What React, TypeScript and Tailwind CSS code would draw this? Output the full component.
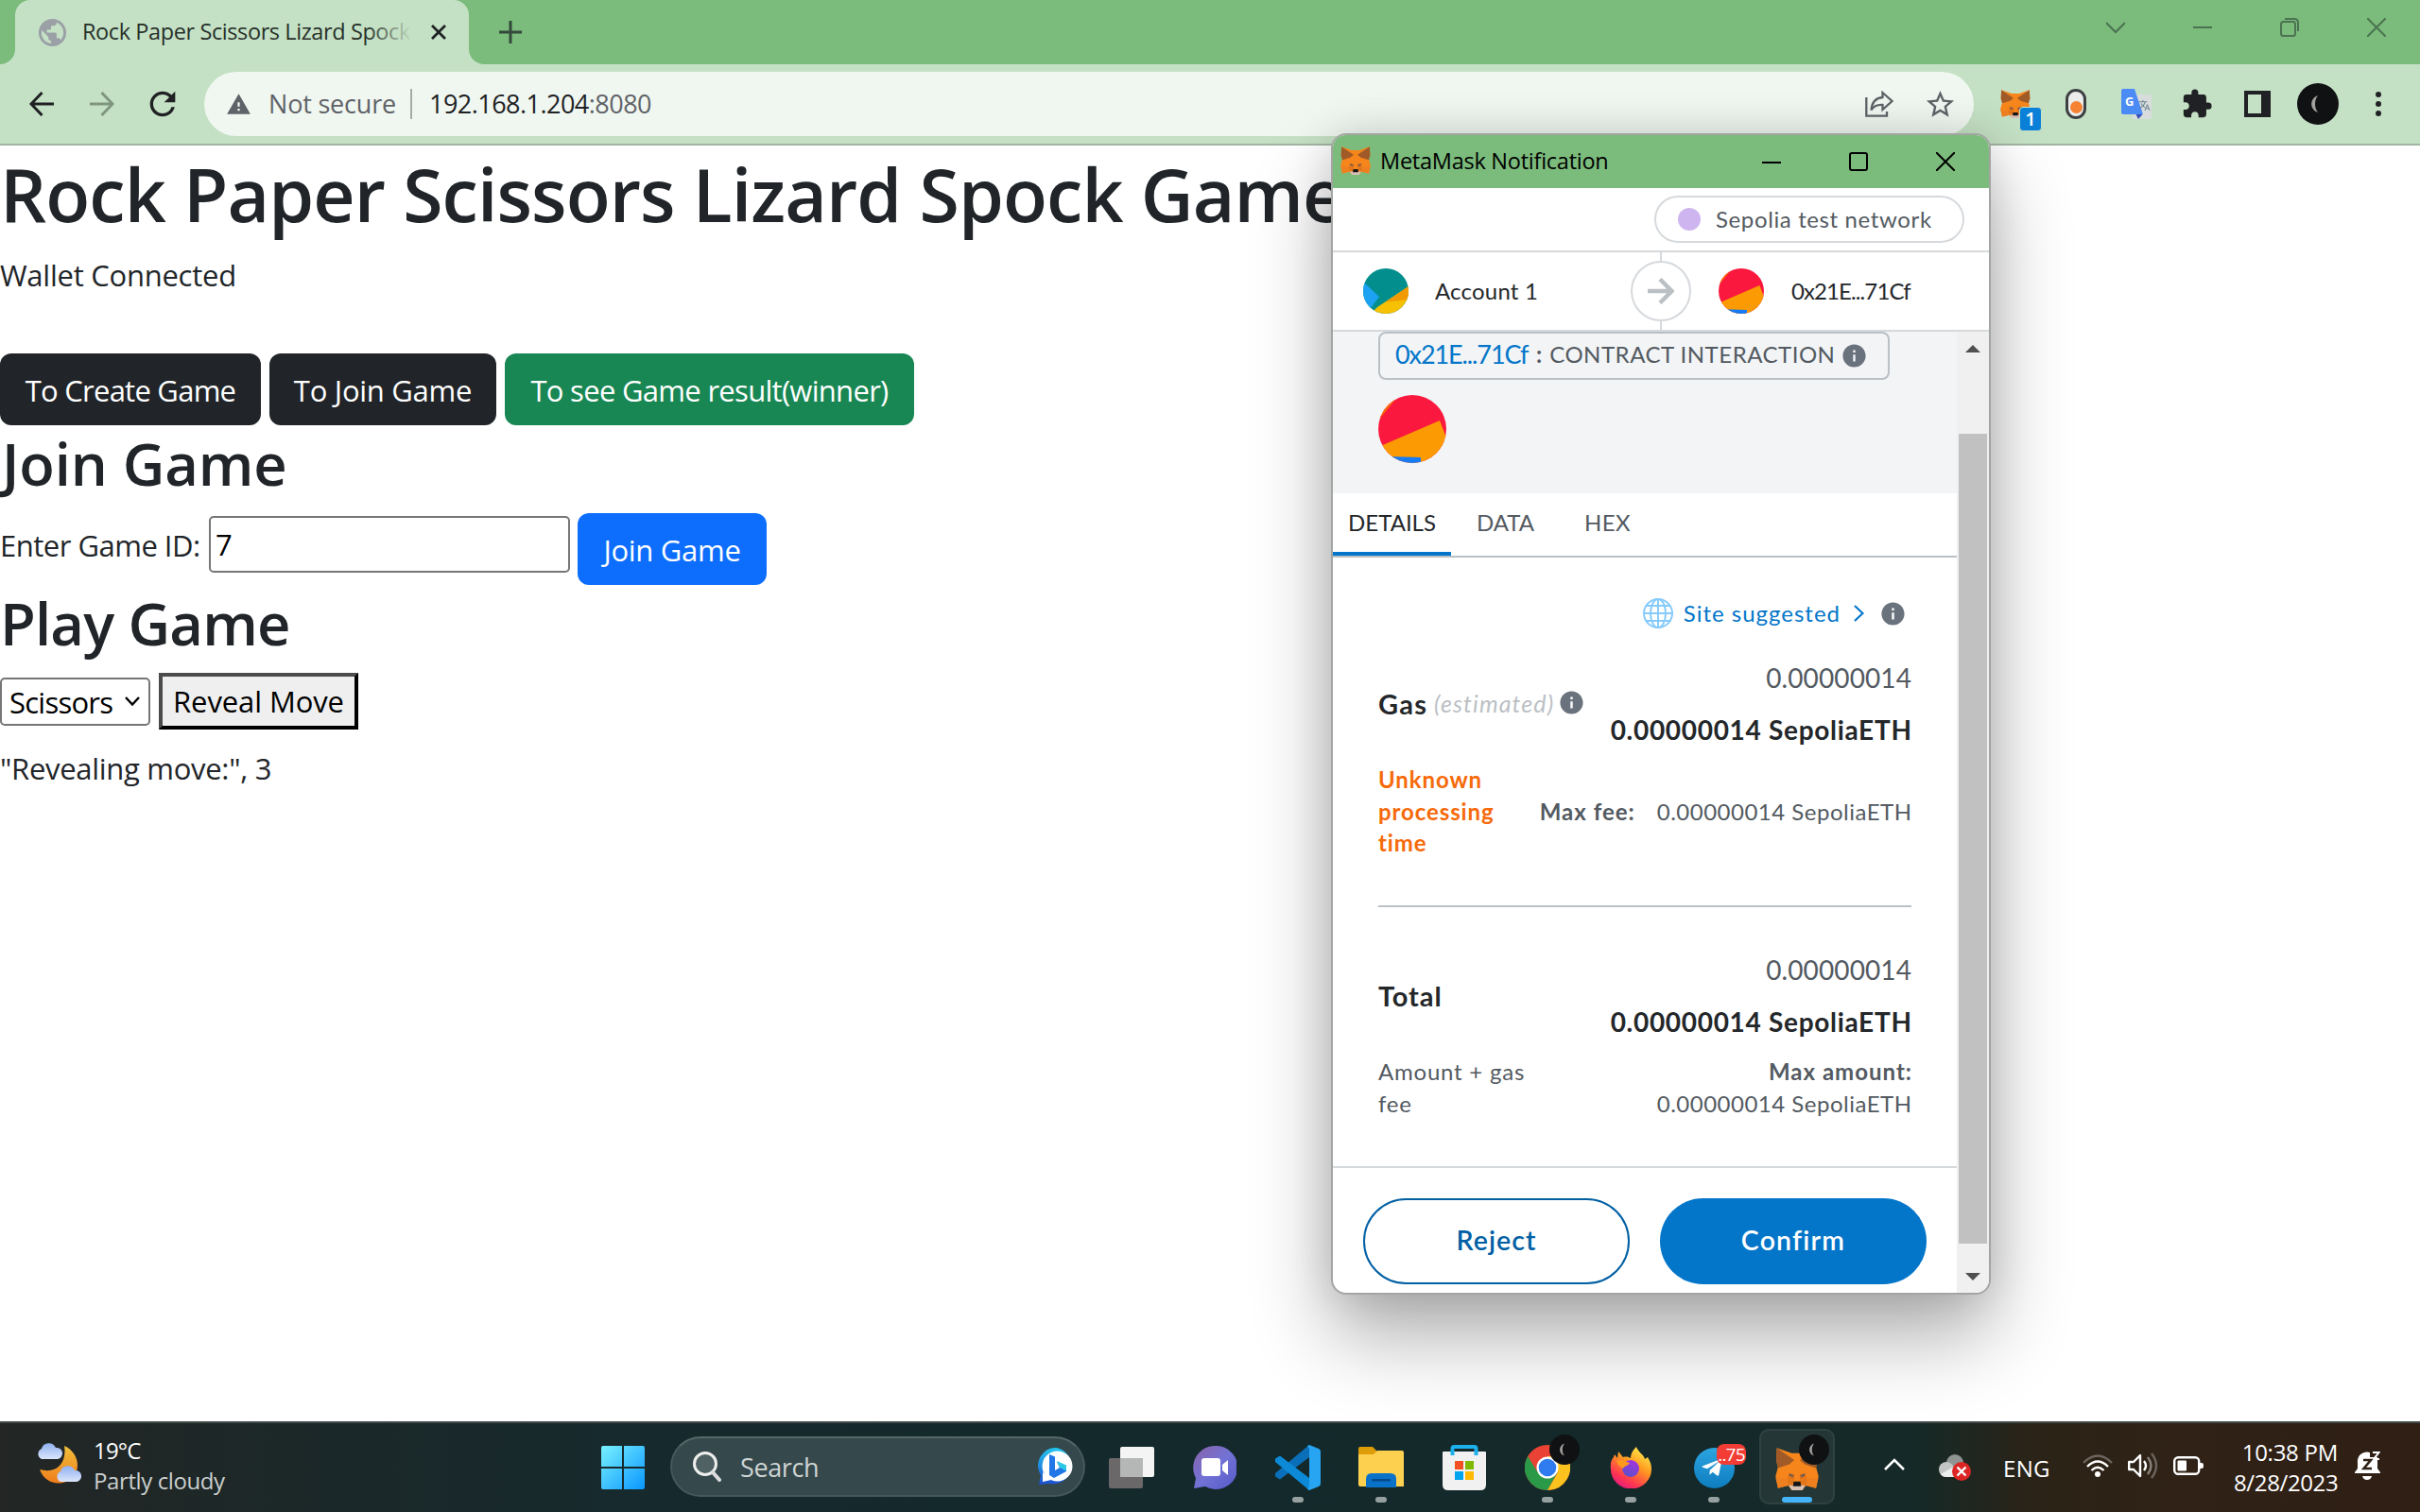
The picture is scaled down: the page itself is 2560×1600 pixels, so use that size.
import type { ReactNode } from "react";
import { MdExtension, MdInfo, MdPublic, MdRefresh, MdStarBorder, MdTranslate, MdWarning } from "react-icons/md";
import { FaTelegramPlane } from "react-icons/fa";

function Fox({ className }: { className?: string }) {
  return (
    <svg viewBox="0 0 142 138" preserveAspectRatio="none" className={className}>
      <path d="M5 1 54 18H88L137 1 139 42 133 62 141 92 133 131 100 123 88 138H54L42 123 9 131 1 92 9 62 3 42Z" fill="#f6851b" />
      <path d="M5 1 62 40 46 54 9 66 3 42Z" fill="#a05a28" />
      <path d="M137 1 80 40 96 54 133 66 139 42Z" fill="#a05a28" />
      <path d="M9 131 42 123 38 100 1 97ZM133 131 100 123 104 100 141 97Z" fill="#ee8020" />
      <path d="M38 97 62 106 58 124 42 123ZM104 97 80 106 84 124 100 123Z" fill="#e2761b" />
      <path d="M40 96 46 82 62 86 62 104ZM102 96 96 82 80 86 80 104Z" fill="#dc701a" />
      <path d="M44 84 60 90 57 95 47 91ZM98 84 82 90 85 95 95 91Z" fill="#5b5a5c" />
      <path d="M44 122 60 122H82L98 122 88 138H54Z" fill="#d8c0b4" />
      <path d="M60 110H82L84 125H58Z" fill="#161616" />
    </svg>
  );
}

function Moon({ className }: { className?: string }) {
  return (
    <svg viewBox="0 0 44 44" className={className}>
      <circle cx="22" cy="22" r="22" fill="#101113" />
      <path d="M22 13c-9 3-9 15 0 18-4-5-4-13 0-18z" fill="#a3a09d" />
    </svg>
  );
}

function BrowserTop() {
  return (
    <header className="flex h-[154px] flex-none flex-col bg-[#c5e1c5]">
      <div className="flex h-[68px] bg-[#7bbb7c]">
        <div className="flex w-4 items-end bg-[#c5e1c5]">
          <div className="h-[68px] w-4 rounded-br-[16px] bg-[#7bbb7c]" />
        </div>
        <div className="w-[480px] bg-[#7bbb7c]">
          <div className="flex h-[68px] items-center rounded-t-[16px] bg-[#c5e1c5] pl-[22px]">
            <MdPublic className="size-[35px] flex-none text-[#9aa0a6]" />
            <div className="relative ml-[14px] h-9 w-[349px] overflow-hidden text-[23.5px] leading-[35px] tracking-[-0.4px] whitespace-nowrap text-[#27302a]">
              Rock Paper Scissors Lizard Spock
              <div className="absolute top-0 right-0 h-full w-12 bg-linear-to-r from-transparent to-[#c5e1c5]" />
            </div>
            <svg viewBox="0 0 20 20" className="ml-[18px] size-[20px]" stroke="#202124" strokeWidth="2.8" fill="none">
              <path d="M3 3 17 17M17 3 3 17" />
            </svg>
          </div>
        </div>
        <div className="flex w-4 bg-[#c5e1c5]">
          <div className="h-[68px] w-4 rounded-bl-[16px] bg-[#7bbb7c]" />
        </div>
        <svg viewBox="0 0 24 24" className="mt-[22px] ml-4 size-6" stroke="#33493a" strokeWidth="3" fill="none">
          <path d="M12 0V24M0 12H24" />
        </svg>
        <div className="mr-9 ml-auto flex items-start gap-[72px] pt-[19px]">
          <svg viewBox="0 0 20 20" className="size-5" stroke="#4b7350" strokeWidth="2" fill="none"><path d="M0 5 10 15 20 5" /></svg>
          <svg viewBox="0 0 20 20" className="size-5" stroke="#4b7350" strokeWidth="2" fill="none"><path d="M0 10H20" /></svg>
          <svg viewBox="0 0 20 20" className="size-5" stroke="#4b7350" strokeWidth="2" fill="none">
            <rect x="1" y="4" width="15" height="15" rx="2.5" /><path d="M5 1H15Q19 1 19 5V14" />
          </svg>
          <svg viewBox="0 0 20 20" className="size-5" stroke="#4b7350" strokeWidth="2" fill="none"><path d="M0 0 20 20M20 0 0 20" /></svg>
        </div>
      </div>
      <div className="flex h-[86px] items-start border-b-2 border-[#a1b6a2] pt-2">
        <div className="flex h-[68px] w-[216px] items-center pl-[31px]">
          <svg viewBox="0 0 26 26" className="size-[26px]" stroke="#202124" strokeWidth="3" fill="none"><path d="M26 13H2M13.500 1 2 13 13.500 25" /></svg>
          <svg viewBox="0 0 26 26" className="ml-[38px] size-[26px]" stroke="#80957f" strokeWidth="3" fill="none"><path d="M0 13H24M12.500 1 24 13 12.500 25" /></svg>
          <MdRefresh className="ml-[31px] size-10 text-[#202124]" />
        </div>
        <div className="flex h-[68px] w-[1872px] items-center rounded-full bg-[#f0f7f0] pl-[23px]">
          <MdWarning className="size-[27px] text-[#5f6368]" />
          <span className="ml-[18px] w-[134px] text-[27px] leading-[68px] tracking-[-0.2px] whitespace-nowrap text-[#5f6368]">Not secure</span>
          <div className="ml-[16px] h-8 w-[2px] bg-[#a5aba6]" />
          <span className="ml-[18px] text-[27px] leading-[68px] tracking-[-0.53px] whitespace-nowrap text-[#202124]">
            192.168.1.204<span className="text-[#5f6368]">:8080</span>
          </span>
          <svg viewBox="0 0 30 28" className="ml-auto h-7 w-[30px]" stroke="#5f6368" strokeWidth="2.300" fill="none">
            <path d="M1.300 7V26.700H23V22" />
            <path d="M18.500 2 28.500 11 18.500 20V15Q10 14.500 6.500 20.500 7.500 8 18.500 7Z" />
          </svg>
          <MdStarBorder className="mr-[18px] ml-[32px] size-[35px] text-[#5f6368]" />
        </div>
        <div className="ml-7 flex h-[68px] items-center">
          <div className="relative h-[30px] w-8">
            <Fox className="h-[30px] w-8" />
            <div className="absolute top-[18px] left-5 flex h-[26px] w-6 items-center justify-center rounded-[4px] border border-[#c5e1c5] bg-[#0b80d8] text-[20px] font-semibold text-white">1</div>
          </div>
          <div className="ml-[37px] flex h-8 w-[22px] items-end justify-center rounded-full border-[3px] border-[#3c4043] bg-[#ececec] pb-[3px]">
            <div className="size-[13px] rounded-full bg-[#f58233]" />
          </div>
          <svg viewBox="0 0 32 32" className="ml-[37px] size-8">
            <rect x="12" y="6" width="20" height="26" rx="2" fill="#d9dcdd" />
            <path d="M15.500 27H22.500L18 32Z" fill="#3450b5" />
            <path d="M2 0H14L23 27H2Q0 27 0 25V2Q0 0 2 0Z" fill="#4b8bf5" />
            <text x="4" y="18" fontSize="13" fontWeight="700" fill="#fff">G</text>
            <MdTranslate x="18" y="11" size="13" color="#6b8790" />
          </svg>
          <MdExtension className="ml-[31px] size-[34px] text-[#202124]" />
          <div className="ml-[33px] h-7 w-7 border-y-[4px] border-r-[10px] border-l-[4px] border-[#202124]" />
          <Moon className="ml-7 size-11" />
          <div className="ml-[39px] flex flex-col gap-1">
            <div className="size-[6px] rounded-full bg-[#202124]" />
            <div className="size-[6px] rounded-full bg-[#202124]" />
            <div className="size-[6px] rounded-full bg-[#202124]" />
          </div>
        </div>
      </div>
    </header>
  );
}

function GamePage() {
  return (
    <main className="flex min-h-0 flex-1 flex-col bg-white pt-[4px] text-[31px] text-[#212529]">
      <h1 className="h-[95px] text-[77px] leading-[96px] font-semibold tracking-[-0.9px] whitespace-nowrap">Rock Paper Scissors Lizard Spock Game</h1>
      <p className="mt-[14px] h-12 leading-[48px] tracking-[-0.25px]">Wallet Connected</p>
      <div className="mt-[59px] flex h-[76px] text-white">
        <button className="w-[276px] rounded-[12px] bg-[#212529] pt-[2px] tracking-[-0.75px]">To Create Game</button>
        <button className="ml-[9px] w-[240px] rounded-[12px] bg-[#212529] pt-[2px] tracking-[-0.27px]">To Join Game</button>
        <button className="ml-[9px] w-[433px] rounded-[12px] bg-[#198754] pt-[2px] tracking-[-0.7px]">To see Game result(winner)</button>
      </div>
      <h2 className="mt-[2px] h-[76px] pl-[2px] text-[61.5px] leading-[76px] font-semibold tracking-[-0.1px]">Join Game</h2>
      <div className="mt-[15px] flex h-[76px] items-start">
        <label className="w-[221px] leading-[68px] tracking-[-0.5px]">Enter Game ID:</label>
        <div className="mt-[3px] h-[60px] w-[382px] rounded-[5px] border-2 border-[#767676] bg-white pl-[5px] leading-[57px] text-black">7</div>
        <button className="ml-2 h-[76px] w-[200px] rounded-[12px] bg-[#0d6efd] pt-[2px] tracking-[-0.3px] text-white">Join Game</button>
      </div>
      <h2 className="mt-[2px] h-[76px] text-[61.5px] leading-[76px] font-semibold tracking-[-0.8px]">Play Game</h2>
      <div className="mt-[15px] flex h-[60px] items-center text-black">
        <div className="flex h-[51px] w-[159px] items-center rounded-[5px] border-2 border-[#767676] bg-white pl-[8px]">
          <span className="w-[122px] pt-[3px] tracking-[-0.75px]">Scissors</span>
          <svg viewBox="0 0 16 10" className="h-[10px] w-4" stroke="#000" strokeWidth="2.400" fill="none"><path d="M1 1 8 8.500 15 1" /></svg>
        </div>
        <button className="ml-[9px] h-[60px] w-[211px] border-4 border-t-[#4c4c4c] border-r-black border-b-black border-l-[#4c4c4c] bg-[#efefef] pt-px tracking-[-0.1px]">Reveal Move</button>
      </div>
      <p className="mt-[17px] h-12 leading-[48px] tracking-[-0.3px]">"Revealing move:", 3</p>
    </main>
  );
}

function TargetAvatar({ className }: { className?: string }) {
  return (
    <svg viewBox="0 0 72 72" className={className}>
      <clipPath id="disc"><circle cx="36" cy="36" r="36" /></clipPath>
      <g clipPath="url(#disc)">
        <rect width="72" height="72" fill="#fb183f" />
        <path d="M0 0H22L4 22 0 28Z" fill="#fa6a05" />
        <path d="M0 55 65 27 80 66V80H0Z" fill="#fb9a02" />
        <path d="M10 65 45 66V80H5Z" fill="#167bf5" />
      </g>
    </svg>
  );
}

function AccountAvatar() {
  return (
    <svg viewBox="0 0 48 48" className="size-12">
      <clipPath id="acct"><circle cx="24" cy="24" r="24" /></clipPath>
      <g clipPath="url(#acct)">
        <rect width="48" height="48" fill="#018e8c" />
        <path d="M15 41 48 19V48H8Z" fill="#f6c003" />
        <path d="M48 19 24 35.500 48 33Z" fill="#f29a02" />
        <path d="M0 14 17 30 8 42 0 44Z" fill="#1ba2f2" />
      </g>
    </svg>
  );
}

function Info({ className }: { className?: string }) {
  return <MdInfo className={`size-[29px] flex-none text-[#6a737d] ${className ?? ""}`} />;
}

function FeeRow({ label, children }: { label: ReactNode; children?: ReactNode }) {
  return (
    <div className="flex h-[110px] items-center justify-between">
      <div className="flex items-center">{label}{children}</div>
      <div className="text-right text-[28px] leading-[55px] whitespace-nowrap">
        <div className="tracking-[0.1px] text-[#535a61]">0.00000014</div>
        <div className="-mr-[0.700px] font-bold tracking-[0.7px] text-[#24272a]">0.00000014 SepoliaETH</div>
      </div>
    </div>
  );
}

function Notification() {
  return (
    <section className="absolute top-[141px] left-[1408px] flex h-[1229px] w-[698px] flex-col overflow-hidden rounded-[16px] border-2 border-[#a3a5a3] bg-white font-['Lato',sans-serif] text-[24px] text-[#24272a] shadow-[0_44px_84px_rgba(0,0,0,0.32),0_0_44px_rgba(0,0,0,0.12)]">
      <div className="flex h-14 flex-none items-center bg-[#7bbb7c] pl-[8px] font-['Open_Sans',sans-serif] text-[23.5px] text-black">
        <Fox className="-mt-[2px] h-[30px] w-[32px]" />
        <span className="ml-[10px] tracking-[-0.25px]">MetaMask Notification</span>
        <div className="mr-9 ml-auto flex gap-[72px]">
          <svg viewBox="0 0 20 20" className="size-5" stroke="#000" strokeWidth="2" fill="none"><path d="M0 11H20" /></svg>
          <svg viewBox="0 0 20 20" className="size-5" stroke="#000" strokeWidth="2" fill="none"><rect x="1" y="1" width="18" height="18" rx="2" /></svg>
          <svg viewBox="0 0 20 20" className="size-5" stroke="#000" strokeWidth="2" fill="none"><path d="M0 0 20 20M20 0 0 20" /></svg>
        </div>
      </div>
      <div className="flex h-[68px] flex-none items-center justify-end border-b-2 border-[#d6d9dc] pr-[26px]">
        <div className="flex h-[50px] w-[328px] items-center rounded-full border-2 border-[#d6d9dc] pl-[23px]">
          <div className="size-6 rounded-full bg-[#cfb5f0]" />
          <span className="ml-4 pb-px tracking-[0.62px] text-[#535a61]">Sepolia test network</span>
        </div>
      </div>
      <div className="flex h-[84px] flex-none items-center border-b-2 border-[#d6d9dc]">
        <div className="flex w-[315px] items-center pl-8">
          <AccountAvatar />
          <span className="ml-[28px] pb-px tracking-[0.2px]">Account 1</span>
        </div>
        <div className="flex h-full flex-col items-center">
          <div className="w-[2px] flex-1 bg-[#d6d9dc]" />
          <div className="flex size-16 items-center justify-center rounded-full border-2 border-[#d6d9dc]">
            <svg viewBox="0 0 28 28" className="size-7" stroke="#bbc0c5" strokeWidth="4.500" fill="none"><path d="M0 14H25M13 1.500 25.500 14 13 26.500" /></svg>
          </div>
          <div className="w-[2px] flex-1 bg-[#d6d9dc]" />
        </div>
        <TargetAvatar className="ml-[29px] size-12" />
        <span className="ml-[29px] pb-px tracking-[-0.9px]">0x21E...71Cf</span>
      </div>
      <div className="flex min-h-0 flex-1">
        <div className="flex w-[660px] flex-col">
          <div className="h-[171px] flex-none bg-[#f2f4f6] pl-12">
            <div className="flex h-[51px] w-[541px] items-center rounded-[8px] border-2 border-[#bbc0c5] pb-[3px] pl-[16px] whitespace-nowrap text-[#535a61]">
              <span className="w-[140px] text-[27px] tracking-[-1.100px] text-[#0376c9]">0x21E...71Cf</span>
              <span className="ml-[9px] font-bold">:</span>
              <span className="ml-[8px] tracking-[0.5px]">CONTRACT INTERACTION</span>
              <Info className="mt-[2px] ml-[6px]" />
            </div>
            <TargetAvatar className="mt-4 size-[72px]" />
          </div>
          <div className="flex h-[68px] flex-none border-b-2 border-[#bbc0c5] leading-[62px] text-[#535a61]">
            <div className="w-[125px] border-b-4 border-[#0376c9] text-center text-[#24272a]">DETAILS</div>
            <div className="ml-[27px] w-[63px]">DATA</div>
            <div className="ml-[51px] tracking-[0.4px]">HEX</div>
          </div>
          <div className="h-[644px] flex-none px-12 pt-[43px]">
            <div className="flex h-8 items-center justify-end pr-[5px] text-[#0376c9]">
              <svg viewBox="0 0 32 32" className="size-8" stroke="#86cbfb" strokeWidth="2" fill="none">
                <circle cx="16" cy="16" r="15" /><ellipse cx="16" cy="16" rx="8" ry="15" /><path d="M16 1V31M1 16H31M4 8H28M4 24H28" />
              </svg>
              <span className="ml-[11px] pb-px tracking-[1px]">Site suggested</span>
              <svg viewBox="0 0 11 18" className="mr-4 ml-[14px] h-[18px] w-[11px]" stroke="#0376c9" strokeWidth="2.200" fill="none"><path d="M1 1 9.500 9 1 17" /></svg>
              <Info />
            </div>
            <div className="mt-[25px]">
              <FeeRow label={<span className="text-[29px] font-bold tracking-[1.2px]">Gas</span>}>
                <span className="ml-[7px] text-[25px] tracking-[1.100px] text-[#bbc0c5] italic">(estimated)</span>
                <Info className="-mt-[3px] ml-[4px]" />
              </FeeRow>
            </div>
            <div className="mt-2 flex h-[101px] items-center justify-between leading-[33.7px] text-[#535a61]">
              <div className="w-[130px] font-bold tracking-[0.900px] text-[#f66a0a]">Unknown processing time</div>
              <div className="flex">
                <span className="font-bold tracking-[1px]">Max fee:</span>
                <span className="-mr-[0.500px] ml-[23px] tracking-[0.5px]">0.00000014 SepoliaETH</span>
              </div>
            </div>
            <div className="mt-[49px] h-[2px] bg-[#bbc0c5]" />
            <div className="mt-[39px]">
              <FeeRow label={<span className="text-[29px] font-bold tracking-[0.9px]">Total</span>} />
            </div>
            <div className="mt-[8px] flex justify-between leading-[34px] text-[#535a61]">
              <div className="w-[170px] tracking-[0.78px]">Amount + gas fee</div>
              <div className="text-right">
                <div className="-mr-px font-bold tracking-[1px]">Max amount:</div>
                <div className="-mr-[0.500px] tracking-[0.5px]">0.00000014 SepoliaETH</div>
              </div>
            </div>
          </div>
          <div className="flex flex-1 gap-8 border-t-2 border-[#d6d9dc] px-8 pt-8 text-[28.5px] font-semibold">
            <button className="h-[91px] w-[282px] rounded-full border-2 border-[#0260a4] pb-[3px] tracking-[1.100px] text-[#0260a4]">Reject</button>
            <button className="h-[91px] w-[282px] rounded-full bg-[#0376c9] pb-[3px] tracking-[1.200px] text-white">Confirm</button>
          </div>
        </div>
        <div className="flex w-[34px] flex-col items-center bg-[#f0f0f0]">
          <svg viewBox="0 0 16 8" className="mt-[14px] h-2 w-4 flex-none"><path d="M0 8 8 0 16 8Z" fill="#505050" /></svg>
          <div className="mt-[86px] h-[857px] w-[30px] flex-none bg-[#c1c1c1]" />
          <svg viewBox="0 0 16 8" className="mt-[31px] h-2 w-4 flex-none"><path d="M0 0 8 8 16 0Z" fill="#505050" /></svg>
        </div>
      </div>
    </section>
  );
}

function Slot({ children, running }: { children: ReactNode; running?: boolean }) {
  return (
    <div className="relative flex w-[88px] items-center justify-center">
      {children}
      {running && <div className="absolute bottom-[10px] left-[38px] h-[6px] w-3 rounded-full bg-[#97a0a0]" />}
    </div>
  );
}

function Cloud({ x, y }: { x: number; y: number }) {
  return (
    <g transform={`translate(${x} ${y})`}>
      <path d="M6 18a6 6 0 0 1 0-11 8 8 0 0 1 15-1 6 6 0 0 1 2 12z" fill="url(#cloudFill)" />
    </g>
  );
}

function Taskbar() {
  return (
    <footer className="relative flex h-24 flex-none border-t-2 border-[#434b4b] bg-[linear-gradient(90deg,#232625_0%,#1c2828_12%,#162a2e_28%,#13292b_50%,#15292a_70%,#152a28_79%,#2b2317_84%,#302217_90%,#2f1f15_100%)] text-[24px] text-white">
      <div className="flex w-[615px] items-start pl-[38px]">
        <svg viewBox="0 0 48 44" className="mt-5 h-11 w-12">
          <defs>
            <linearGradient id="cloudFill" x1="0" y1="0" x2="0" y2="1"><stop offset="0" stopColor="#8fb0f0" /><stop offset="1" stopColor="#dbe5fb" /></linearGradient>
            <linearGradient id="moonFill" x1="0" y1="0" x2="0" y2="1"><stop offset="0" stopColor="#f0c03a" /><stop offset="1" stopColor="#ef7d1c" /></linearGradient>
          </defs>
          <path d="M30 4C44 10 49 28 38 38 27 48 9 44 4 29 22 34 33 22 30 4Z" fill="url(#moonFill)" />
          <Cloud x={0} y={0} />
          <Cloud x={20} y={24} />
        </svg>
        <div className="mt-[13px] ml-[13px] leading-8">
          <div className="tracking-[-0.8px]">19°C</div>
          <div className="tracking-[-0.4px] text-[#cbcfce]">Partly cloudy</div>
        </div>
      </div>
      <Slot>
        <svg viewBox="0 0 46 46" className="size-[46px]">
          <linearGradient id="win" x1="0" y1="0" x2="1" y2="1" gradientUnits="objectBoundingBox"><stop offset="0" stopColor="#78f1ff" /><stop offset="1" stopColor="#0a96ff" /></linearGradient>
          <path d="M2 0H22V22H0V2Q0 0 2 0ZM24 0H44Q46 0 46 2V22H24ZM0 24H22V46H2Q0 46 0 44ZM24 24H46V44Q46 46 44 46H24Z" fill="url(#win)" />
        </svg>
      </Slot>
      <div className="mt-[14px] mr-[5px] ml-[6px] flex h-16 w-[439px] items-center rounded-full border-2 border-[#44595b] border-t-[#566769] bg-[#35484b] pl-[22px] text-[27px] text-[#cfd4d4]">
        <svg viewBox="0 0 30 32" className="h-8 w-[30px]" fill="none">
          <circle cx="13" cy="13" r="11.500" fill="#506163" stroke="#eee" strokeWidth="3" />
          <path d="M21 22 28 30" stroke="#ddd" strokeWidth="4" strokeLinecap="round" />
        </svg>
        <span className="ml-5 pt-[3px] tracking-[-0.4px]">Search</span>
        <svg viewBox="0 0 40 40" className="mr-[8px] ml-auto size-10">
          <linearGradient id="bing" x1="0" y1="0" x2="0" y2="1"><stop offset="0" stopColor="#22c5ee" /><stop offset="1" stopColor="#1d4fd0" /></linearGradient>
          <path d="M20 0A19 19 0 1 1 12 38L1 39 3 29A19 19 0 0 1 20 0Z" fill="url(#bing)" />
          <circle cx="20.500" cy="19.500" r="16" fill="#fff" /><path d="M5 26V36L14 34Z" fill="#fff" />
          <path d="M12 7 18 9.500V24L23 21 20 15 30 19V25L17 32 12 29Z" fill="#2176e8" />
          <path d="M20 14 30 18.500V24.500L23 21Z" fill="#2cc8e4" />
        </svg>
      </div>
      <Slot>
        <svg viewBox="0 0 48 44" className="h-11 w-12">
          <rect x="12" width="36" height="32" rx="2" fill="#f4f4f4" />
          <rect y="12" width="36" height="32" rx="2" fill="#6b6869" />
          <rect x="12" y="12" width="24" height="20" fill="#b5b6b6" />
        </svg>
      </Slot>
      <Slot>
        <svg viewBox="0 0 46 46" className="size-[46px]">
          <linearGradient id="chat" x1="0" y1="0" x2="1" y2="1"><stop offset="0" stopColor="#8a62a8" /><stop offset=".5" stopColor="#7272d6" /><stop offset="1" stopColor="#5558c8" /></linearGradient>
          <path d="M23 0A23 23 0 1 1 13 43L1 45 3 34A23 23 0 0 1 23 0Z" fill="url(#chat)" />
          <rect x="9" y="13" width="20" height="19" rx="3" fill="#fff" /><path d="M31 20 37 15V31L31 26Z" fill="#fff" />
        </svg>
      </Slot>
      <Slot running>
        <svg viewBox="0 0 48 48" className="size-12">
          <path d="M36 0V13L5 36.500 0 33.500V30Z" fill="#0a6fb8" />
          <path d="M5 11.500 36 35V48L0 18V14.500Z" fill="#0c8ad8" />
          <path d="M36 0 46 4Q48 5 48 7V41Q48 43 46 44L36 48 34 47 36 44V4L34 1Z" fill="#27a5f2" />
        </svg>
      </Slot>
      <Slot running>
        <svg viewBox="0 0 48 44" className="h-11 w-12">
          <path d="M0 2Q0 0 2 0H15L20 5V14H0Z" fill="#dd9d09" />
          <path d="M0 8H16L20 4H46Q48 4 48 6V42H2Q0 42 0 40Z" fill="#fed050" />
          <path d="M8 43V34Q8 28 14 28H34Q40 28 40 34V43Z" fill="#0a72c8" />
          <rect x="14" y="34" width="20" height="2.500" rx="1" fill="#064a8c" />
        </svg>
      </Slot>
      <Slot>
        <svg viewBox="0 0 46 48" className="h-12 w-[46px]">
          <path d="M10.500 12V4Q10.500 2 12.500 2H33.500Q35.500 2 35.500 4V12" stroke="#1cb0ec" strokeWidth="4" fill="none" />
          <path d="M0 8Q0 7 1 7H45Q46 7 46 8V42Q46 48 40 48H6Q0 48 0 42Z" fill="#f1f1f1" />
          <path d="M10.500 7V11M35.500 7V11" stroke="#1cb0ec" strokeWidth="4" />
          <path d="M13 17H22V26H13Z" fill="#f25022" /><path d="M24 17H33V26H24Z" fill="#7fba00" />
          <path d="M13 28H22V37H13Z" fill="#00a4ef" /><path d="M24 28H33V37H24Z" fill="#ffb900" />
        </svg>
      </Slot>
      <Slot running>
        <svg viewBox="0 0 48 48" className="size-12">
          <circle cx="24" cy="24" r="24" fill="#ea4335" />
          <path d="M3.200 12A24 24 0 0 0 24 48L34 30 24 24 13 28Z" fill="#2a9a48" />
          <path d="M44.800 12H24L34.500 30 24 48A24 24 0 0 0 44.800 12Z" fill="#fcc31e" />
          <circle cx="24" cy="24" r="11.500" fill="#fff" /><circle cx="24" cy="24" r="9.300" fill="#2f7cf0" />
        </svg>
        <Moon className="absolute top-3 left-[46px] size-8" />
      </Slot>
      <Slot running>
        <svg viewBox="0 0 44 44" className="h-11 w-[44px]">
          <defs>
            <linearGradient id="ff" x1=".8" y1="0" x2=".2" y2="1"><stop offset="0" stopColor="#fff44f" /><stop offset=".4" stopColor="#ff9a1f" /><stop offset=".75" stopColor="#ff3750" /><stop offset="1" stopColor="#e01585" /></linearGradient>
            <linearGradient id="ffc" x1=".7" y1="0" x2=".3" y2="1"><stop offset="0" stopColor="#a733e0" /><stop offset="1" stopColor="#5a50c8" /></linearGradient>
          </defs>
          <path d="M28 0C30 6 36 8 37 13L40 11C43 16 44 19 44 24A21.500 20.500 0 0 1 1 24C0 17 2 13 4 11L5 8 8 12 9 5 14 11C18 10 20 11 22 12 22 7 25 3 28 0Z" fill="url(#ff)" />
          <circle cx="22" cy="23" r="9" fill="url(#ffc)" />
          <path d="M7 15C12 12 16 16 21 17 20 20 15 20 14 23 11 22 8 18 7 15Z" fill="#ff9a1f" />
        </svg>
      </Slot>
      <Slot running>
        <div className="flex size-[43px] items-center justify-center rounded-full bg-linear-to-b from-[#2ba5e0] to-[#0d7dc0]">
          <FaTelegramPlane className="mr-1 size-6 text-white" />
        </div>
        <div className="absolute top-[22px] left-[47px] flex h-[22px] w-[31px] items-center justify-center rounded-[8px] bg-[#f23c34] text-[19px] tracking-[-0.8px]">..75</div>
      </Slot>
      <Slot>
        <div className="mt-[-2px] flex h-20 w-20 items-center justify-center rounded-[10px] border-2 border-[#2f4241] bg-[#243736]">
          <Fox className="mt-1 h-[45px] w-[46px]" />
        </div>
        <Moon className="absolute top-3 left-[46px] size-8" />
        <div className="absolute bottom-[10px] left-7 h-[6px] w-8 rounded-full bg-[#45b5fb]" />
      </Slot>
      <div className="ml-auto flex items-center pr-[42px]">
        <svg viewBox="0 0 22 13" className="-mt-2 h-[13px] w-[22px]" stroke="#fff" strokeWidth="2.600" fill="none"><path d="M1 12 11 2 21 12" /></svg>
        <svg viewBox="0 0 34 28" className="ml-[36px] h-7 w-[34px]">
          <circle cx="17" cy="9" r="9" fill="#8f9391" /><circle cx="8" cy="16" r="8" fill="#c3c5c4" /><path d="M2 21 14 14 20 12V24H8Q4 24 2 21Z" fill="#eee" />
          <circle cx="24" cy="18" r="10" fill="#dc2626" /><path d="M19.500 13.500 28.500 22.500M28.500 13.500 19.500 22.500" stroke="#fff" strokeWidth="2.400" />
        </svg>
        <span className="ml-[34px] w-[50px] pt-px tracking-[0.3px]">ENG</span>
        <svg viewBox="0 0 32 24" className="ml-[34px] -mt-1 h-6 w-8" fill="none" strokeWidth="2.400">
          <path d="M1 9Q16-6 31 9" stroke="#6d655d" /><path d="M5 13Q16 2 27 13" stroke="#fff" /><path d="M9.500 17Q16 10.500 22.500 17" stroke="#fff" /><circle cx="16" cy="21" r="3" fill="#fff" />
        </svg>
        <svg viewBox="0 0 32 28" className="ml-4 -mt-1 h-7 w-8" fill="none" strokeWidth="2.400">
          <path d="M1.200 10H6L13 3V25L6 18H1.200Z" stroke="#fff" strokeLinejoin="round" /><path d="M17 9Q21 14 17 19" stroke="#fff" /><path d="M21 5Q28 14 21 23" stroke="#8a837c" /><path d="M25 1Q35 14 25 27" stroke="#6d655d" />
        </svg>
        <svg viewBox="0 0 32 20" className="ml-4 -mt-1 h-5 w-8" fill="none">
          <rect x="1.200" y="1.200" width="26" height="17.600" rx="4" stroke="#fff" strokeWidth="2.400" /><rect x="4.500" y="4.500" width="9.500" height="11" rx="1" fill="#fff" /><path d="M28 7H30Q32 7 32 10T30 13H28Z" fill="#fff" />
        </svg>
        <div className="ml-8 -mt-px w-[110px] text-right leading-8 whitespace-nowrap">
          <div className="tracking-[-0.27px]">10:38 PM</div>
          <div className="tracking-[-0.37px]">8/28/2023</div>
        </div>
        <div className="relative ml-[18px] -mt-1 h-[30px] w-[27px]">
          <svg viewBox="0 0 27 30" className="h-[30px] w-[27px]" fill="#fff">
            <path d="M3 12A10 10 0 0 1 16 1V6H24V18L27 22V23H0V22L3 18ZM8 26H18Q17 30 13 30T8 26Z" />
            <path d="M19 1H25.500L20 8H26" stroke="#fff" strokeWidth="2" fill="none" />
            <path d="M9 9H17L9.500 18H18" stroke="#302217" strokeWidth="2.600" fill="none" />
          </svg>
        </div>
      </div>
    </footer>
  );
}

export default function App() {
  return (
    <div className="relative flex h-[1600px] w-[2560px] flex-col overflow-hidden font-['Open_Sans',sans-serif]">
      <BrowserTop />
      <GamePage />
      <Notification />
      <Taskbar />
    </div>
  );
}
